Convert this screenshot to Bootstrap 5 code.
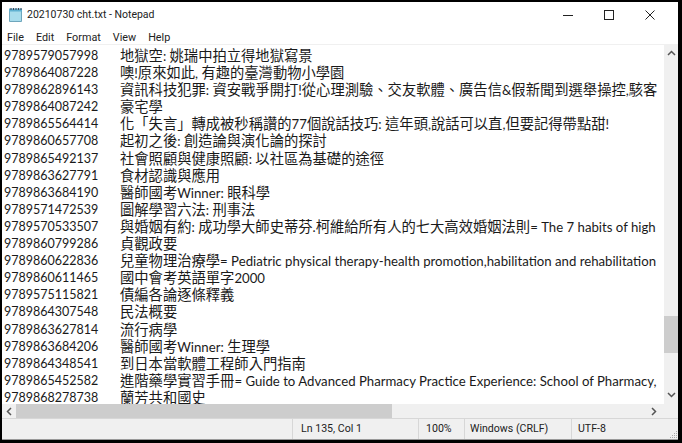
<!DOCTYPE html>
<html lang="zh-Hant">
<head>
  <meta charset="UTF-8">
  <title>20210730 cht.txt - Notepad</title>
  <link href="https://cdn.jsdelivr.net/npm/bootstrap@5.3.5/dist/css/bootstrap.min.css" rel="stylesheet">
  <style>
    html, body { height: 100%; overflow: hidden; }
    body { background: #000; font-family: "Noto Sans CJK TC", "Liberation Sans", sans-serif; color: #1a1a1a; }
    .np-frame { height: 443px; padding: 2px 4px 3px 2px; }
    .np-window { height: 100%; background: #fff; }
    .np-title { height: 25px; padding-left: 6px; font: 10.5px Roboto, sans-serif; color: #222; }
    .np-ctrl { width: 41px; }
    .np-menu { height: 18px; padding: 3px 0 0 5px; gap: 12px; font: 10.8px Roboto, sans-serif; color: #222; border-bottom: 1px solid #f0f0f0; }
    .np-edit { min-height: 0; }
    .np-text { min-width: 0; overflow: hidden; margin-right: 4px; padding-top: 1px; }
    .np-row { height: 17.1px; line-height: 17.1px; font-size: 14.3px; white-space: nowrap; }
    .np-isbn { width: 118px; padding: 1px 0 0 2px; flex: none; font: 12.5px/17.1px Lato, sans-serif; }
    .np-lat { font: 13.2px/17.1px Lato, sans-serif; }
    .np-vbar { width: 14px; background: #f0f0f0; }
    .np-arrow { height: 15px; }
    .np-vgap { height: 51px; padding-bottom: 6px; }
    .np-vthumb { height: 37px; background: #cdcdcd; }
    .np-hbar { height: 14px; background: #f0f0f0; }
    .np-hleft { width: 14px; }
    .np-hthumb { width: 376px; background: #cdcdcd; }
    .np-hright { width: 31px; }
    .np-status { height: 22px; background: #f0f0f0; font: 10.6px Roboto, sans-serif; color: #222; border-top: 1px solid #d7d7d7; border-bottom: 1px solid #999; }
    .np-cell { border-left: 1px solid #d7d7d7; line-height: 20px; }
    .np-ln { width: 126px; padding-left: 8px; }
    .np-zoom { width: 46px; padding-left: 7px; }
    .np-enc { width: 107px; padding-left: 5px; }
    .np-utf { width: 107px; padding-left: 6px; }
  </style>
</head>
<body>
  <div class="np-frame">
  <div class="np-window d-flex flex-column">
    <div class="np-title d-flex align-items-center flex-shrink-0">
      <svg width="15" height="14" viewBox="0 0 15 14" class="me-1">
        <path d="M1.500 2.500h12v11h-12z" fill="#a8dcec" stroke="#6fa6bc"/>
        <path d="M1 .5h13v3H1z" fill="#5fb0d0"/>
        <path d="M3 0v2M5.500 0v2M8 0v2M10.500 0v2M13 0v2" stroke="#445"/>
      </svg>
      <span class="flex-grow-1">20210730 cht.txt - Notepad</span>
      <div class="np-ctrl d-flex justify-content-center">
        <svg width="10" height="10" viewBox="0 0 10 10"><path d="M0 5.500h10" stroke="#222"/></svg>
      </div>
      <div class="np-ctrl d-flex justify-content-center">
        <svg width="10" height="10" viewBox="0 0 10 10"><rect x=".5" y=".5" width="9" height="9" fill="none" stroke="#222"/></svg>
      </div>
      <div class="np-ctrl d-flex justify-content-center me-2">
        <svg width="10" height="10" viewBox="0 0 10 10"><path d="M.5.5l9 9M9.500.5l-9 9" stroke="#222"/></svg>
      </div>
    </div>
    <div class="np-menu d-flex align-items-center flex-shrink-0">
      <span>File</span><span>Edit</span><span>Format</span><span>View</span><span>Help</span>
    </div>
    <div class="np-edit d-flex flex-grow-1">
      <div class="np-text flex-grow-1">
        <div class="np-row d-flex"><span class="np-isbn">9789579057998</span><span>地獄空<span class="np-lat">: </span>姚瑞中拍立得地獄寫景</span></div>
        <div class="np-row d-flex"><span class="np-isbn">9789864087228</span><span>噢<span class="np-lat">!</span>原來如此<span class="np-lat">, </span>有趣的臺灣動物小學園</span></div>
        <div class="np-row d-flex"><span class="np-isbn">9789862896143</span><span>資訊科技犯罪<span class="np-lat">: </span>資安戰爭開打<span class="np-lat">!</span>從心理測驗、交友軟體、廣告信<span class="np-lat">&amp;</span>假新聞到選舉操控<span class="np-lat">,</span>駭客</span></div>
        <div class="np-row d-flex"><span class="np-isbn">9789864087242</span><span>豪宅學</span></div>
        <div class="np-row d-flex"><span class="np-isbn">9789865564414</span><span>化「失言」轉成被秒稱讚的<span class="np-lat">77</span>個說話技巧<span class="np-lat">: </span>這年頭<span class="np-lat">,</span>說話可以直<span class="np-lat">,</span>但要記得帶點甜<span class="np-lat">!</span></span></div>
        <div class="np-row d-flex"><span class="np-isbn">9789860657708</span><span>起初之後<span class="np-lat">: </span>創造論與演化論的探討</span></div>
        <div class="np-row d-flex"><span class="np-isbn">9789865492137</span><span>社會照顧與健康照顧<span class="np-lat">: </span>以社區為基礎的途徑</span></div>
        <div class="np-row d-flex"><span class="np-isbn">9789863627791</span><span>食材認識與應用</span></div>
        <div class="np-row d-flex"><span class="np-isbn">9789863684190</span><span>醫師國考<span class="np-lat">Winner: </span>眼科學</span></div>
        <div class="np-row d-flex"><span class="np-isbn">9789571472539</span><span>圖解學習六法<span class="np-lat">: </span>刑事法</span></div>
        <div class="np-row d-flex"><span class="np-isbn">9789570533507</span><span>與婚姻有約<span class="np-lat">: </span>成功學大師史蒂芬<span class="np-lat">.</span>柯維給所有人的七大高效婚姻法則<span class="np-lat">= The 7 habits of high</span></span></div>
        <div class="np-row d-flex"><span class="np-isbn">9789860799286</span><span>貞觀政要</span></div>
        <div class="np-row d-flex"><span class="np-isbn">9789860622836</span><span>兒童物理治療學<span class="np-lat">= Pediatric physical therapy-health promotion,habilitation and rehabilitation</span></span></div>
        <div class="np-row d-flex"><span class="np-isbn">9789860611465</span><span>國中會考英語單字<span class="np-lat">2000</span></span></div>
        <div class="np-row d-flex"><span class="np-isbn">9789575115821</span><span>債編各論逐條釋義</span></div>
        <div class="np-row d-flex"><span class="np-isbn">9789864307548</span><span>民法概要</span></div>
        <div class="np-row d-flex"><span class="np-isbn">9789863627814</span><span>流行病學</span></div>
        <div class="np-row d-flex"><span class="np-isbn">9789863684206</span><span>醫師國考<span class="np-lat">Winner: </span>生理學</span></div>
        <div class="np-row d-flex"><span class="np-isbn">9789864348541</span><span>到日本當軟體工程師入門指南</span></div>
        <div class="np-row d-flex"><span class="np-isbn">9789865452582</span><span>進階藥學實習手冊<span class="np-lat">= Guide to Advanced Pharmacy Practice Experience: School of Pharmacy,</span></span></div>
        <div class="np-row d-flex"><span class="np-isbn">9789868278738</span><span>蘭芳共和國史</span></div>
      </div>
      <div class="np-vbar d-flex flex-column flex-shrink-0">
        <div class="np-arrow d-flex justify-content-center align-items-center">
          <svg width="9" height="6" viewBox="0 0 9 6"><path d="M1 5l3.500-3.500L8 5" fill="none" stroke="#555" stroke-width="1.500"/></svg>
        </div>
        <div class="flex-grow-1"></div>
        <div class="np-vthumb"></div>
        <div class="np-vgap d-flex justify-content-center align-items-end">
          <svg width="9" height="6" viewBox="0 0 9 6"><path d="M1 1l3.500 3.500L8 1" fill="none" stroke="#555" stroke-width="1.500"/></svg>
        </div>
      </div>
    </div>
    <div class="np-hbar d-flex flex-shrink-0">
      <div class="np-hleft d-flex justify-content-center align-items-center">
        <svg width="6" height="9" viewBox="0 0 6 9"><path d="M5 1L1.500 4.500 5 8" fill="none" stroke="#555" stroke-width="1.500"/></svg>
      </div>
      <div class="np-hthumb"></div>
      <div class="flex-grow-1"></div>
      <div class="np-hright d-flex justify-content-start align-items-center ps-1">
        <svg width="6" height="9" viewBox="0 0 6 9"><path d="M1 1l3.500 3.500L1 8" fill="none" stroke="#555" stroke-width="1.500"/></svg>
      </div>
    </div>
    <div class="np-status d-flex justify-content-end flex-shrink-0">
      <div class="np-cell np-ln">Ln 135, Col 1</div>
      <div class="np-cell np-zoom">100%</div>
      <div class="np-cell np-enc">Windows (CRLF)</div>
      <div class="np-cell np-utf d-flex justify-content-between">UTF-8
        <svg width="9" height="9" viewBox="0 0 9 9" class="align-self-end"><path d="M7 1h1v1H7zM5 3h1v1H5zM7 3h1v1H7zM3 5h1v1H3zM5 5h1v1H5zM7 5h1v1H7zM1 7h1v1H1zM3 7h1v1H3zM5 7h1v1H5zM7 7h1v1H7z" fill="#a8a8a8"/></svg>
      </div>
    </div>
  </div>
  </div>
  <script src="https://cdn.jsdelivr.net/npm/bootstrap@5.3.5/dist/js/bootstrap.bundle.min.js"></script>
</body>
</html>
